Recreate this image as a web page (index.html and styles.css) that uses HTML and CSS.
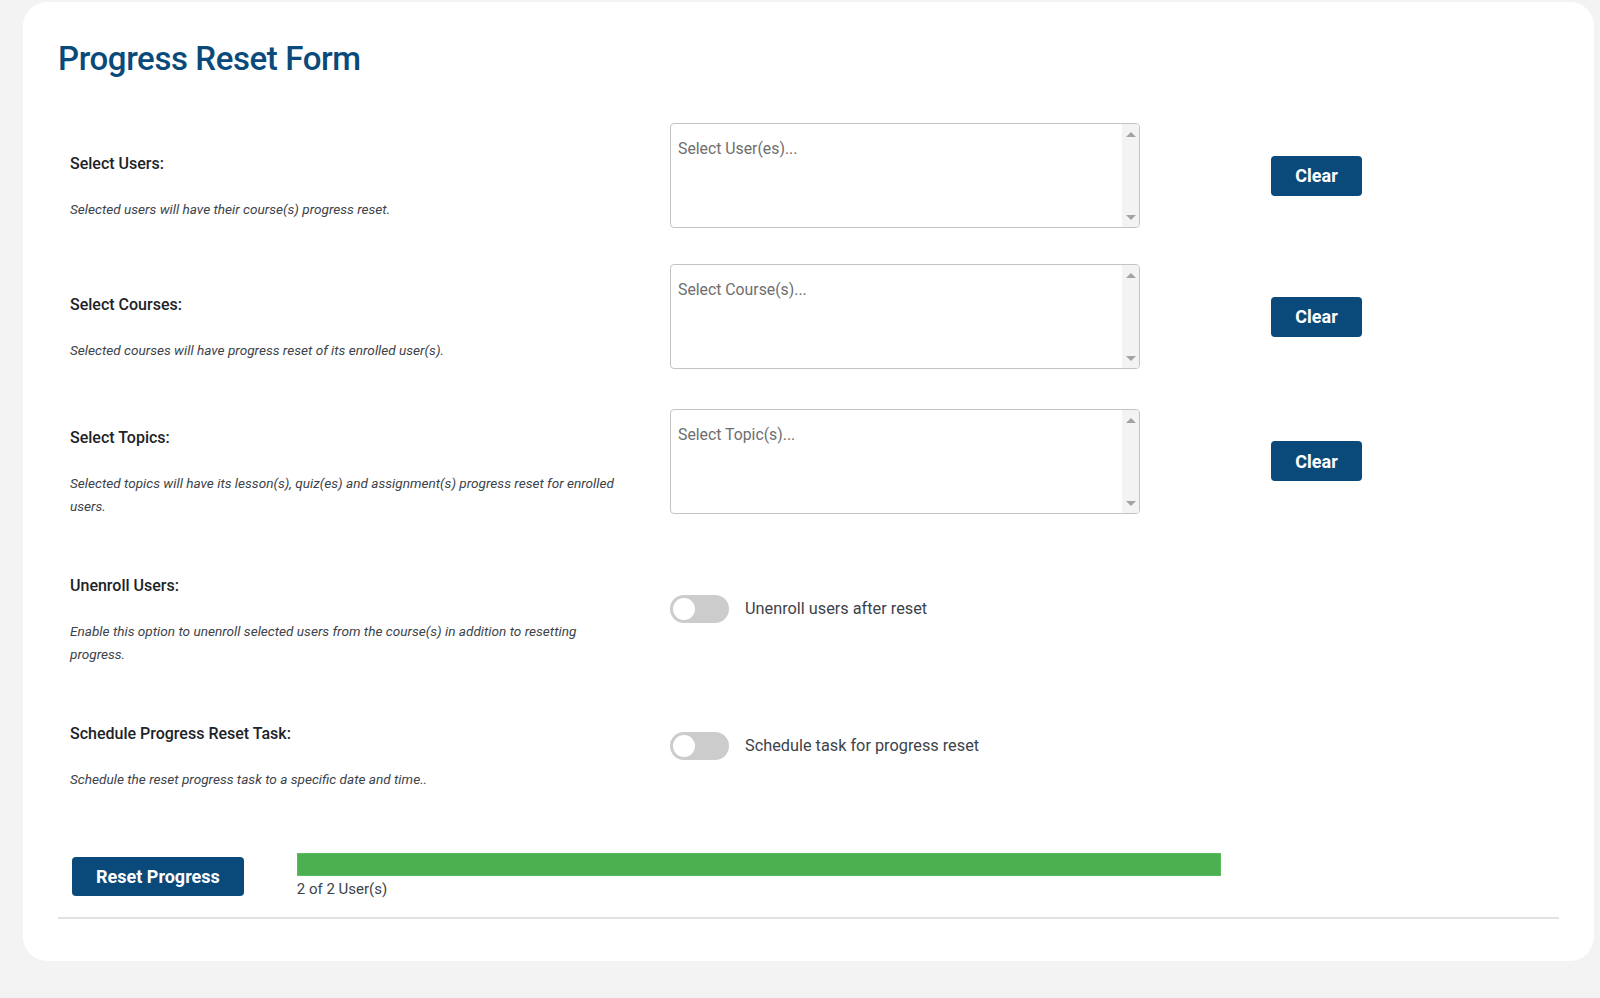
FILE: index.html
```html
<!DOCTYPE html>
<html lang="en">
<head>
<meta charset="utf-8">
<title>Progress Reset Form</title>
<link rel="stylesheet" href="styles.css">
</head>
<body>
<div class="page">
  <div class="card">
    <h1 class="title">Progress Reset Form</h1>
    <div class="rows">
      <div class="row">
        <div class="cell label-cell">
          <div class="label">Select Users:</div>
          <p class="desc">Selected users will have their course(s) progress reset.</p>
        </div>
        <div class="cell">
          <div class="select">
            <div class="select-text">Select User(es)...</div>
            <div class="scroll"><span class="arr up"></span><span class="arr down"></span></div>
          </div>
        </div>
        <div class="cell"><button class="btn clear">Clear</button></div>
      </div>
      <div class="row">
        <div class="cell label-cell">
          <div class="label">Select Courses:</div>
          <p class="desc">Selected courses will have progress reset of its enrolled user(s).</p>
        </div>
        <div class="cell">
          <div class="select">
            <div class="select-text">Select Course(s)...</div>
            <div class="scroll"><span class="arr up"></span><span class="arr down"></span></div>
          </div>
        </div>
        <div class="cell"><button class="btn clear">Clear</button></div>
      </div>
      <div class="row">
        <div class="cell label-cell">
          <div class="label">Select Topics:</div>
          <p class="desc">Selected topics will have its lesson(s), quiz(es) and assignment(s) progress reset for enrolled users.</p>
        </div>
        <div class="cell">
          <div class="select">
            <div class="select-text">Select Topic(s)...</div>
            <div class="scroll"><span class="arr up"></span><span class="arr down"></span></div>
          </div>
        </div>
        <div class="cell"><button class="btn clear">Clear</button></div>
      </div>
      <div class="row">
        <div class="cell label-cell">
          <div class="label">Unenroll Users:</div>
          <p class="desc">Enable this option to unenroll selected users from the course(s) in addition to resetting progress.</p>
        </div>
        <div class="cell">
          <label class="toggle"><span class="switch"><span class="knob"></span></span><span class="toggle-text">Unenroll users after reset</span></label>
        </div>
        <div class="cell"></div>
      </div>
      <div class="row">
        <div class="cell label-cell">
          <div class="label">Schedule Progress Reset Task:</div>
          <p class="desc">Schedule the reset progress task to a specific date and time..</p>
        </div>
        <div class="cell">
          <label class="toggle"><span class="switch"><span class="knob"></span></span><span class="toggle-text">Schedule task for progress reset</span></label>
        </div>
        <div class="cell"></div>
      </div>
    </div>
    <div class="footer">
      <button class="btn reset">Reset Progress</button>
      <div class="progress">
        <div class="bar"><div class="fill" style="width:100%"></div></div>
        <div class="count">2 of 2 User(s)</div>
      </div>
    </div>
    <hr class="sep">
  </div>
</div>
</body>
</html>
```

FILE: styles.css
```css
html, body {
  margin: 0;
  background: #f3f3f3;
  font-family: Roboto, "Noto Sans", "Liberation Sans", sans-serif;
  color: #1d2327;
}

.page {
  padding: 2px 6px 37px 23px;
}

.card {
  background: #ffffff;
  border-radius: 24px;
  padding: 0 35px 42px;
}

.title {
  margin: 0;
  padding-top: 34px;
  font-size: 33px;
  line-height: 46px;
  font-weight: 500;
  letter-spacing: -0.4px;
  color: #0a4a7a;
}

.rows {
  margin-top: 23px;
}

.row {
  display: grid;
  grid-template-columns: 600px 601px 1fr;
  align-items: center;
  padding: 18px 0;
}

.cell {
  padding: 0 12px;
}

.label-cell {
  padding-top: 21px;
  margin-bottom: -1px;
}

.label {
  font-size: 16px;
  line-height: 24px;
  font-weight: 500;
  color: #1d2327;
}

.desc {
  margin: 22px 0 0;
  max-width: 556px;
  font-size: 13.6px;
  line-height: 23px;
  font-style: italic;
  color: #3c434a;
}

.select {
  display: flex;
  width: 470px;
  height: 105px;
  box-sizing: border-box;
  border: 1px solid #c3c4c7;
  border-radius: 4px;
  overflow: hidden;
}

.select-text {
  flex: 1;
  padding: 14px 7px 10px;
  font-size: 15.8px;
  line-height: 22px;
  color: #6e6e6e;
}

.scroll {
  width: 17px;
  background: #f3f3f3;
  display: flex;
  flex-direction: column;
  justify-content: space-between;
  align-items: center;
  padding: 8px 0 7px;
}

.arr {
  width: 0;
  height: 0;
  border-left: 5px solid transparent;
  border-right: 5px solid transparent;
}

.arr.up {
  border-bottom: 5px solid #a3a3a3;
}

.arr.down {
  border-top: 5px solid #a3a3a3;
}

.btn {
  border: 0;
  border-radius: 4px;
  background: #0a4a7a;
  color: #ffffff;
  font-family: inherit;
  font-weight: 700;
  font-size: 18px;
  cursor: pointer;
}

.clear {
  width: 91px;
  height: 40px;
  padding: 0;
}

.toggle {
  display: flex;
  align-items: center;
  gap: 16px;
}

.switch {
  display: flex;
  align-items: center;
  width: 59px;
  height: 28px;
  box-sizing: border-box;
  padding: 0 3px;
  border-radius: 14px;
  background: #cccccc;
}

.knob {
  width: 22px;
  height: 22px;
  border-radius: 50%;
  background: #ffffff;
}

.toggle-text {
  font-size: 16.3px;
  line-height: 24px;
  color: #3c434a;
}

.footer {
  display: flex;
  align-items: center;
  gap: 53px;
  margin-top: 45px;
  padding-left: 14px;
}

.reset {
  height: 39px;
  padding: 0 24px;
}

.progress {
  width: 924px;
}

.bar {
  height: 23px;
  background: #ffffff;
}

.fill {
  height: 100%;
  background: #4caf50;
  box-shadow: inset 0 0 0 1px #5cbd5f;
}

.count {
  padding-top: 3px;
  font-size: 15px;
  line-height: 21px;
  color: #3c434a;
}

.sep {
  margin: 17px 0 0;
  border: 0;
  height: 2px;
  background: #e2e2e2;
}
```
